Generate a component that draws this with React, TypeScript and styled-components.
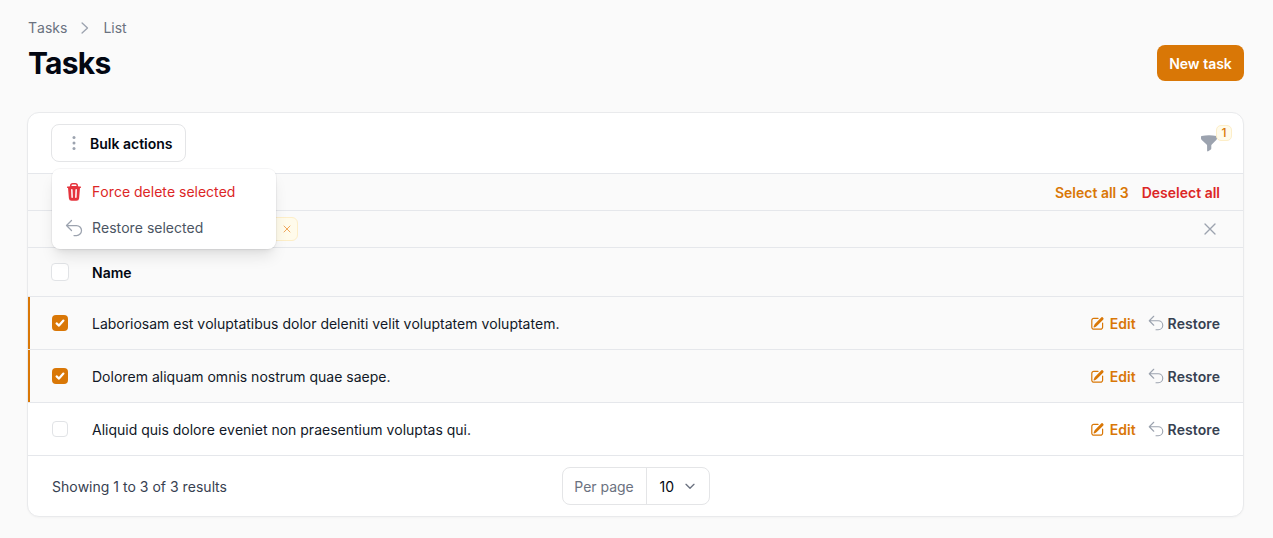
import React from "react";
import styled, { createGlobalStyle } from "styled-components";

const Global = createGlobalStyle`
  html, body { margin: 0; padding: 0; background: #fafafa; }
  body { font-family: Inter, "Liberation Sans", sans-serif; color: #030712; font-size: 14px; line-height: 20px; font-kerning: none; }
  * { box-sizing: border-box; }
`;

const Page = styled.div`
  width: 1273px;
  height: 538px;
  padding: 18px 29px 0 27px;
  overflow: hidden;
`;
const Head = styled.header`
  display: flex;
  justify-content: space-between;
  align-items: flex-end;
  height: 63px;
  padding-left: 1px;
`;
const Crumbs = styled.nav`
  display: flex;
  align-items: center;
  gap: 8px;
  color: #6b7280;
  height: 20px;
`;
const Title = styled.h1`
  margin: 7px 0 0;
  font-size: 30px;
  line-height: 36px;
  font-weight: 700;
  letter-spacing: -0.75px;
  font-kerning: normal;
  color: #030712;
`;
const Primary = styled.button`
  width: 87px;
  height: 36px;
  border: 0;
  border-radius: 8px;
  padding: 2px 0 0;
  background: #d97706;
  color: #fff;
  font: 600 14px/20px Inter, sans-serif;
`;
const Card = styled.section`
  position: relative;
  margin-top: 31px;
  height: 405px;
  background: #fff;
  border: 1px solid #e9eaec;
  border-radius: 12px;
  box-shadow: 0 1px 2px rgba(0, 0, 0, 0.03);
`;
const Toolbar = styled.div`
  height: 60px;
  padding: 0 16px 0 23px;
  display: flex;
  align-items: center;
  justify-content: space-between;
`;
const Bulk = styled.button`
  width: 135px;
  height: 38px;
  display: flex;
  align-items: center;
  gap: 6px;
  padding: 0 0 0 12px;
  background: #fff;
  border: 1px solid #e4e5e7;
  border-radius: 8px;
  color: #030712;
  white-space: nowrap;
  font: 600 14px/20px Inter, sans-serif;
`;
const Label = styled.span`
  padding-top: 2px;
`;
const FilterBtn = styled.div`
  position: relative;
  width: 36px;
  height: 36px;
  display: flex;
  align-items: center;
  justify-content: center;
`;
const Badge = styled.span`
  position: absolute;
  left: 25px;
  top: 0;
  width: 16px;
  height: 16px;
  border-radius: 5px;
  background: #fffbeb;
  border: 1px solid #fdeec8;
  color: #d97706;
  font-size: 12px;
  font-weight: 500;
  line-height: 14px;
  text-align: center;
`;
const Bar = styled.div`
  height: 37px;
  border-top: 1px solid #e5e7eb;
  background: #fafafa;
  display: flex;
  align-items: center;
  justify-content: space-between;
  padding: 0 23px 0 24px;
`;
const Links = styled.div`
  display: flex;
  gap: 13px;
  margin-left: auto;
  padding-top: 2px;
`;
const LinkText = styled.a<{ $c: string }>`
  color: ${(p) => p.$c};
  font-weight: 600;
`;
const FilterGroup = styled.div`
  width: 246px;
  display: flex;
  align-items: center;
  justify-content: flex-end;
`;
const Chip = styled.span`
  display: inline-flex;
  align-items: center;
  justify-content: flex-end;
  width: 60px;
  height: 24px;
  padding: 0 4px 0 8px;
  background: #fffbeb;
  border: 1px solid #fdeec8;
  border-radius: 6px;
`;
const Table = styled.table`
  width: 100%;
  border-collapse: separate;
  border-spacing: 0;
  table-layout: fixed;
  td, th { border-top: 1px solid #e5e7eb; }
`;
const HeadRow = styled.tr`
  height: 49px;
  background: #fafafa;
`;
const Row = styled.tr<{ $sel?: boolean }>`
  height: 53px;
  background: ${(p) => (p.$sel ? "#fafafa" : "#fff")};
`;
const CheckCell = styled.td<{ $sel?: boolean }>`
  width: 64px;
  padding: 0 0 0 23px;
  box-shadow: ${(p) => (p.$sel ? "inset 2px 0 0 #d97706" : "none")};
`;
const NameHead = styled.th`
  text-align: left;
  font-weight: 600;
  font-size: 14px;
  color: #030712;
  padding: 2px 0 0;
`;
const NameCell = styled.td`
  padding: 2px 0 0;
  color: #111827;
`;
const ActionCell = styled.td`
  width: 190px;
  padding: 0 23px 0 0;
`;
const Actions = styled.div`
  display: flex;
  justify-content: flex-end;
  align-items: center;
  gap: 11px;
`;
const Action = styled.a<{ $c: string; $gap: number }>`
  display: inline-flex;
  align-items: center;
  gap: ${(p) => p.$gap}px;
  color: ${(p) => p.$c};
  font-weight: 600;
`;
const Box = styled.span<{ $on?: boolean; $big?: boolean }>`
  width: ${(p) => (p.$big ? 18 : 16)}px;
  height: ${(p) => (p.$big ? 18 : 16)}px;
  margin-left: ${(p) => (p.$big ? 0 : 1)}px;
  border-radius: 4px;
  background: ${(p) => (p.$on ? "#d97706" : "#fff")};
  border: ${(p) => (p.$on ? "0" : "1px solid #e1e3e6")};
  display: flex;
  align-items: center;
  justify-content: center;
`;
const Footer = styled.div`
  height: 61px;
  border-top: 1px solid #e5e7eb;
  display: grid;
  grid-template-columns: 1fr auto 1fr;
  align-items: center;
  padding: 0 24px;
  color: #374151;
`;
const PerPage = styled.div`
  display: flex;
  width: 148px;
  height: 38px;
  background: #fff;
  border: 1px solid #e4e5e7;
  border-radius: 8px;
`;
const PerLabel = styled.span`
  width: 84px;
  padding-top: 2px;
  border-right: 1px solid #e4e5e7;
  display: flex;
  align-items: center;
  justify-content: center;
  color: #6b7280;
`;
const PerValue = styled.span`
  flex: 1;
  display: flex;
  align-items: center;
  padding-left: 13px;
  gap: 8px;
  color: #030712;
`;
const Menu = styled.div`
  position: absolute;
  left: 24px;
  top: 56px;
  width: 224px;
  height: 80px;
  background: #fff;
  border-radius: 8px;
  box-shadow: 0 10px 15px -3px rgba(0, 0, 0, 0.1), 0 4px 6px -4px rgba(0, 0, 0, 0.1), 0 0 0 1px rgba(3, 7, 18, 0.04);
  padding: 5px 0 0;
  z-index: 5;
`;
const MenuItem = styled.div<{ $c: string }>`
  height: 36px;
  display: flex;
  align-items: center;
  gap: 8px;
  padding-left: 12px;
  color: ${(p) => p.$c};
`;
const MenuIcon = styled.span`
  width: 20px;
  display: flex;
  align-items: center;
  justify-content: center;
`;

const Dots = () => (
  <svg width="20" height="20" viewBox="0 0 20 20" fill="#9ca3af">
    <circle cx="10" cy="4.5" r="1.5" />
    <circle cx="10" cy="10" r="1.5" />
    <circle cx="10" cy="15.5" r="1.5" />
  </svg>
);
const Funnel = () => (
  <svg width="20" height="20" viewBox="0 0 20 20" fill="#9ca3af">
    <path d="M2.600 3.100C5 2.600 7.500 2.300 10 2.300s5 .3 7.400.8c.4.1.6.4.6.8v1.700c0 .4-.2.8-.5 1.100l-4.700 4.700c-.3.3-.5.7-.5 1.100v2.900c0 .6-.3 1.100-.8 1.300l-2.300 1.600c-.5.3-1.100 0-1.100-.6v-5.200c0-.4-.2-.8-.5-1.100L2.500 6.700C2.200 6.400 2 6 2 5.600V3.900c0-.4.2-.7.6-.8Z" />
  </svg>
);
const Cross = ({ size, color, w }: { size: number; color: string; w: number }) => (
  <svg width={size} height={size} viewBox="0 0 24 24" fill="none" stroke={color} strokeWidth={w} strokeLinecap="round">
    <path d="M6 6l12 12M18 6L6 18" />
  </svg>
);
const Undo = ({ size, w }: { size: number; w: number }) => (
  <svg width={size} height={size} viewBox="0 0 24 24" fill="none" stroke="#9ca3af" strokeWidth={w} strokeLinecap="round" strokeLinejoin="round">
    <path d="M9 15 3 9m0 0 6-6M3 9h12a6 6 0 0 1 0 12h-3" />
  </svg>
);
const EditIcon = () => (
  <svg width="16" height="16" viewBox="0 0 20 20" fill="#d97706">
    <path d="m5.400 12.600-.9 2.200a.5.5 0 0 0 .7.7l2.200-.9c.4-.2.8-.4 1.100-.7l7.900-7.900a1.900 1.900 0 0 0-2.700-2.700l-7.600 7.900c-.3.3-.5.7-.7 1.200v.2Z" />
    <path d="M4.750 3.500c-1.800 0-3.250 1.450-3.250 3.250v8.500c0 1.800 1.450 3.250 3.250 3.250h8.500c1.800 0 3.250-1.450 3.250-3.250V10a.75.75 0 0 0-1.500 0v5.250c0 .97-.78 1.750-1.750 1.750h-8.500C3.780 17 3 16.220 3 15.250v-8.500C3 5.780 3.780 5 4.750 5H10a.75.75 0 0 0 0-1.500H4.750Z" />
  </svg>
);
const Trash = () => (
  <svg width="20" height="20" viewBox="0 0 20 20" fill="#e5343d">
    <path fillRule="evenodd" clipRule="evenodd" d="M8.750 1A2.750 2.750 0 0 0 6 3.750v.44c-.8.07-1.580.17-2.370.3a.75.75 0 1 0 .26 1.470l.15-.03.83 10.340A2.750 2.750 0 0 0 7.600 18.800h4.800a2.750 2.750 0 0 0 2.740-2.530l.83-10.340.15.03a.75.75 0 1 0 .25-1.470c-.78-.13-1.570-.23-2.370-.3v-.44A2.750 2.750 0 0 0 11.250 1h-2.500ZM10 4c.84 0 1.670.03 2.500.1v-.35c0-.69-.56-1.250-1.250-1.250h-2.500c-.69 0-1.250.56-1.250 1.250v.35C8.330 4.030 9.160 4 10 4ZM8.580 7.720a.75.75 0 0 0-1.500.06l.3 7.500a.75.75 0 1 0 1.500-.06l-.3-7.500Zm4.340.06a.75.75 0 1 0-1.500-.06l-.3 7.500a.75.75 0 1 0 1.500.06l.3-7.500Z" />
  </svg>
);
const Check = () => (
  <svg width="12" height="12" viewBox="0 0 12 12" fill="none" stroke="#fff" strokeWidth="2.2" strokeLinecap="round" strokeLinejoin="round">
    <path d="M2.600 6.400 5 8.600 9.400 3.600" />
  </svg>
);
const Chevron = ({ size, color, w, d }: { size: number; color: string; w: number; d: string }) => (
  <svg width={size} height={size} viewBox="0 0 24 24" fill="none" stroke={color} strokeWidth={w} strokeLinecap="round" strokeLinejoin="round">
    <path d={d} />
  </svg>
);

const rows = [
  { name: "Laboriosam est voluptatibus dolor deleniti velit voluptatem voluptatem.", sel: true },
  { name: "Dolorem aliquam omnis nostrum quae saepe.", sel: true },
  { name: "Aliquid quis dolore eveniet non praesentium voluptas qui.", sel: false },
];

export default function App() {
  return (
    <Page>
      <Global />
      <Head>
        <div>
          <Crumbs>
            <span>Tasks</span>
            <Chevron size={20} color="#9ca3af" w={1.6} d="M8.500 6l6.500 6-6.500 6" />
            <span>List</span>
          </Crumbs>
          <Title>Tasks</Title>
        </div>
        <Primary>New task</Primary>
      </Head>
      <Card>
        <Toolbar>
          <Bulk>
            <Dots />
            <Label>Bulk actions</Label>
          </Bulk>
          <FilterBtn>
            <Funnel />
            <Badge>1</Badge>
          </FilterBtn>
        </Toolbar>
        <Bar>
          <Links>
            <LinkText $c="#d97706">Select all 3</LinkText>
            <LinkText $c="#dc2626">Deselect all</LinkText>
          </Links>
        </Bar>
        <Bar>
          <FilterGroup>
            <Chip>
              <Cross size={12} color="#f0a75c" w={2} />
            </Chip>
          </FilterGroup>
          <Cross size={20} color="#9ca3af" w={1.6} />
        </Bar>
        <Table>
          <thead>
            <HeadRow>
              <CheckCell as="th"><Box $big /></CheckCell>
              <NameHead>Name</NameHead>
              <ActionCell as="th" />
            </HeadRow>
          </thead>
          <tbody>
            {rows.map((r) => (
              <Row key={r.name} $sel={r.sel}>
                <CheckCell $sel={r.sel}>
                  <Box $on={r.sel}>{r.sel && <Check />}</Box>
                </CheckCell>
                <NameCell>{r.name}</NameCell>
                <ActionCell>
                  <Actions>
                    <Action $c="#d97706" $gap={4}><EditIcon /><Label>Edit</Label></Action>
                    <Action $c="#374151" $gap={3}><Undo size={18} w={1.5} /><Label>Restore</Label></Action>
                  </Actions>
                </ActionCell>
              </Row>
            ))}
          </tbody>
        </Table>
        <Footer>
          <Label>Showing 1 to 3 of 3 results</Label>
          <PerPage>
            <PerLabel>Per page</PerLabel>
            <PerValue>
              <Label>10</Label>
              <Chevron size={16} color="#6b7280" w={2} d="M6 9.500l6 6 6-6" />
            </PerValue>
          </PerPage>
          <span />
        </Footer>
        <Menu>
          <MenuItem $c="#dc2626"><MenuIcon><Trash /></MenuIcon>Force delete selected</MenuItem>
          <MenuItem $c="#4b5563"><MenuIcon><Undo size={24} w={1.5} /></MenuIcon>Restore selected</MenuItem>
        </Menu>
      </Card>
    </Page>
  );
}
